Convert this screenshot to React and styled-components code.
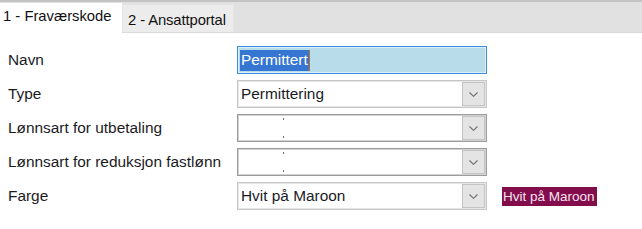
import React from 'react';
import styled, { createGlobalStyle, css } from 'styled-components';

const GlobalStyle = createGlobalStyle`
  html, body { margin: 0; padding: 0; background: #fff; }
  body {
    font-family: "Liberation Sans", Arial, sans-serif;
    font-size: 15.4px;
    color: #1b1b1f;
  }
`;

const Page = styled.div`
  width: 642px;
  height: 229px;
  overflow: hidden;
  background: #fff;
`;

const TabBar = styled.div`
  display: flex;
  align-items: flex-end;
  height: 29px;
  padding-top: 1px;
  border-top: 2px solid #c3c3c3;
  border-bottom: 1px solid #d9d9d9;
  background: #e1e1e1;
`;

const Tab = styled.div`
  display: flex;
  align-items: center;
  box-sizing: border-box;
  white-space: nowrap;
  font-size: 14.8px;
  ${(p) =>
    p.$active
      ? css`
          width: 122px;
          height: 30px;
          margin-bottom: -1px;
          padding: 0 0 4px 3px;
          background: #fff;
          color: #111;
        `
      : css`
          width: 112px;
          height: 28px;
          padding: 3px 0 0 5px;
          background: #ececec;
          border: 1px solid #e4e4e4;
          border-bottom: none;
          letter-spacing: -0.1px;
          color: #111;
        `}
`;

const Form = styled.div`
  display: grid;
  grid-template-columns: 229px 250px auto;
  grid-auto-rows: 28px;
  row-gap: 6px;
  align-items: center;
  padding: 13px 0 0 8px;
`;

const Label = styled.div`
  white-space: nowrap;
`;

const TextInput = styled.div`
  box-sizing: border-box;
  height: 28px;
  display: flex;
  align-items: center;
  padding-left: 2px;
  border: 1px solid #3f8de0;
  box-shadow: inset 0 0 0 1px #d9eef6;
  background: #b8dcea;
`;

const Selected = styled.span`
  background: #3476d2;
  color: #fff;
  padding: 1px 1px 2px 1px;
  border-right: 1px solid #c0701a;
`;

const Combo = styled.div`
  position: relative;
  box-sizing: border-box;
  height: 28px;
  display: flex;
  align-items: center;
  justify-content: space-between;
  padding: 0 1px 0 3px;
  background: #fff;
  border: 1px solid ${(p) => (p.$dark ? '#9c9c9c' : '#c6c6c6')};
  box-shadow: inset 0 0 0 1px ${(p) => (p.$dark ? '#d2d2d2' : '#e6e6e6')};

  ${(p) =>
    p.$dark &&
    css`
      &::before,
      &::after {
        content: '';
        position: absolute;
        left: 45px;
        width: 1px;
        height: 2px;
        background: #777;
      }
      &::before { top: 3px; }
      &::after { bottom: 3px; }
    `}
`;

const DropButton = styled.div`
  box-sizing: border-box;
  width: 23px;
  height: 24px;
  display: flex;
  align-items: center;
  justify-content: center;
  background: #e4e4e4;
  border: 1px solid #c4c4c4;
`;

const Badge = styled.div`
  justify-self: start;
  margin-left: 15px;
  height: 19px;
  display: flex;
  align-items: center;
  padding: 0 2px 0 1px;
  background: #830c4d;
  color: #f3e4ee;
  font-size: 13.5px;
  white-space: nowrap;
`;

const Chevron = () => (
  <svg width="9" height="5" viewBox="0 0 9 5">
    <path d="M0.5 0.5 L4.5 4.3 L8.5 0.5" fill="none" stroke="#6d6d6d" strokeWidth="1.1" />
  </svg>
);

const Select = ({ value, dark }) => (
  <Combo $dark={dark}>
    <span>{value}</span>
    <DropButton>
      <Chevron />
    </DropButton>
  </Combo>
);

export default function App() {
  return (
    <Page>
      <GlobalStyle />
      <TabBar>
        <Tab $active>1 - Fraværskode</Tab>
        <Tab>2 - Ansattportal</Tab>
      </TabBar>
      <Form>
        <Label>Navn</Label>
        <TextInput>
          <Selected>Permittert</Selected>
        </TextInput>
        <span />

        <Label>Type</Label>
        <Select value="Permittering" />
        <span />

        <Label>Lønnsart for utbetaling</Label>
        <Select value="" dark />
        <span />

        <Label>Lønnsart for reduksjon fastlønn</Label>
        <Select value="" dark />
        <span />

        <Label>Farge</Label>
        <Select value="Hvit på Maroon" />
        <Badge>Hvit på Maroon</Badge>
      </Form>
    </Page>
  );
}
